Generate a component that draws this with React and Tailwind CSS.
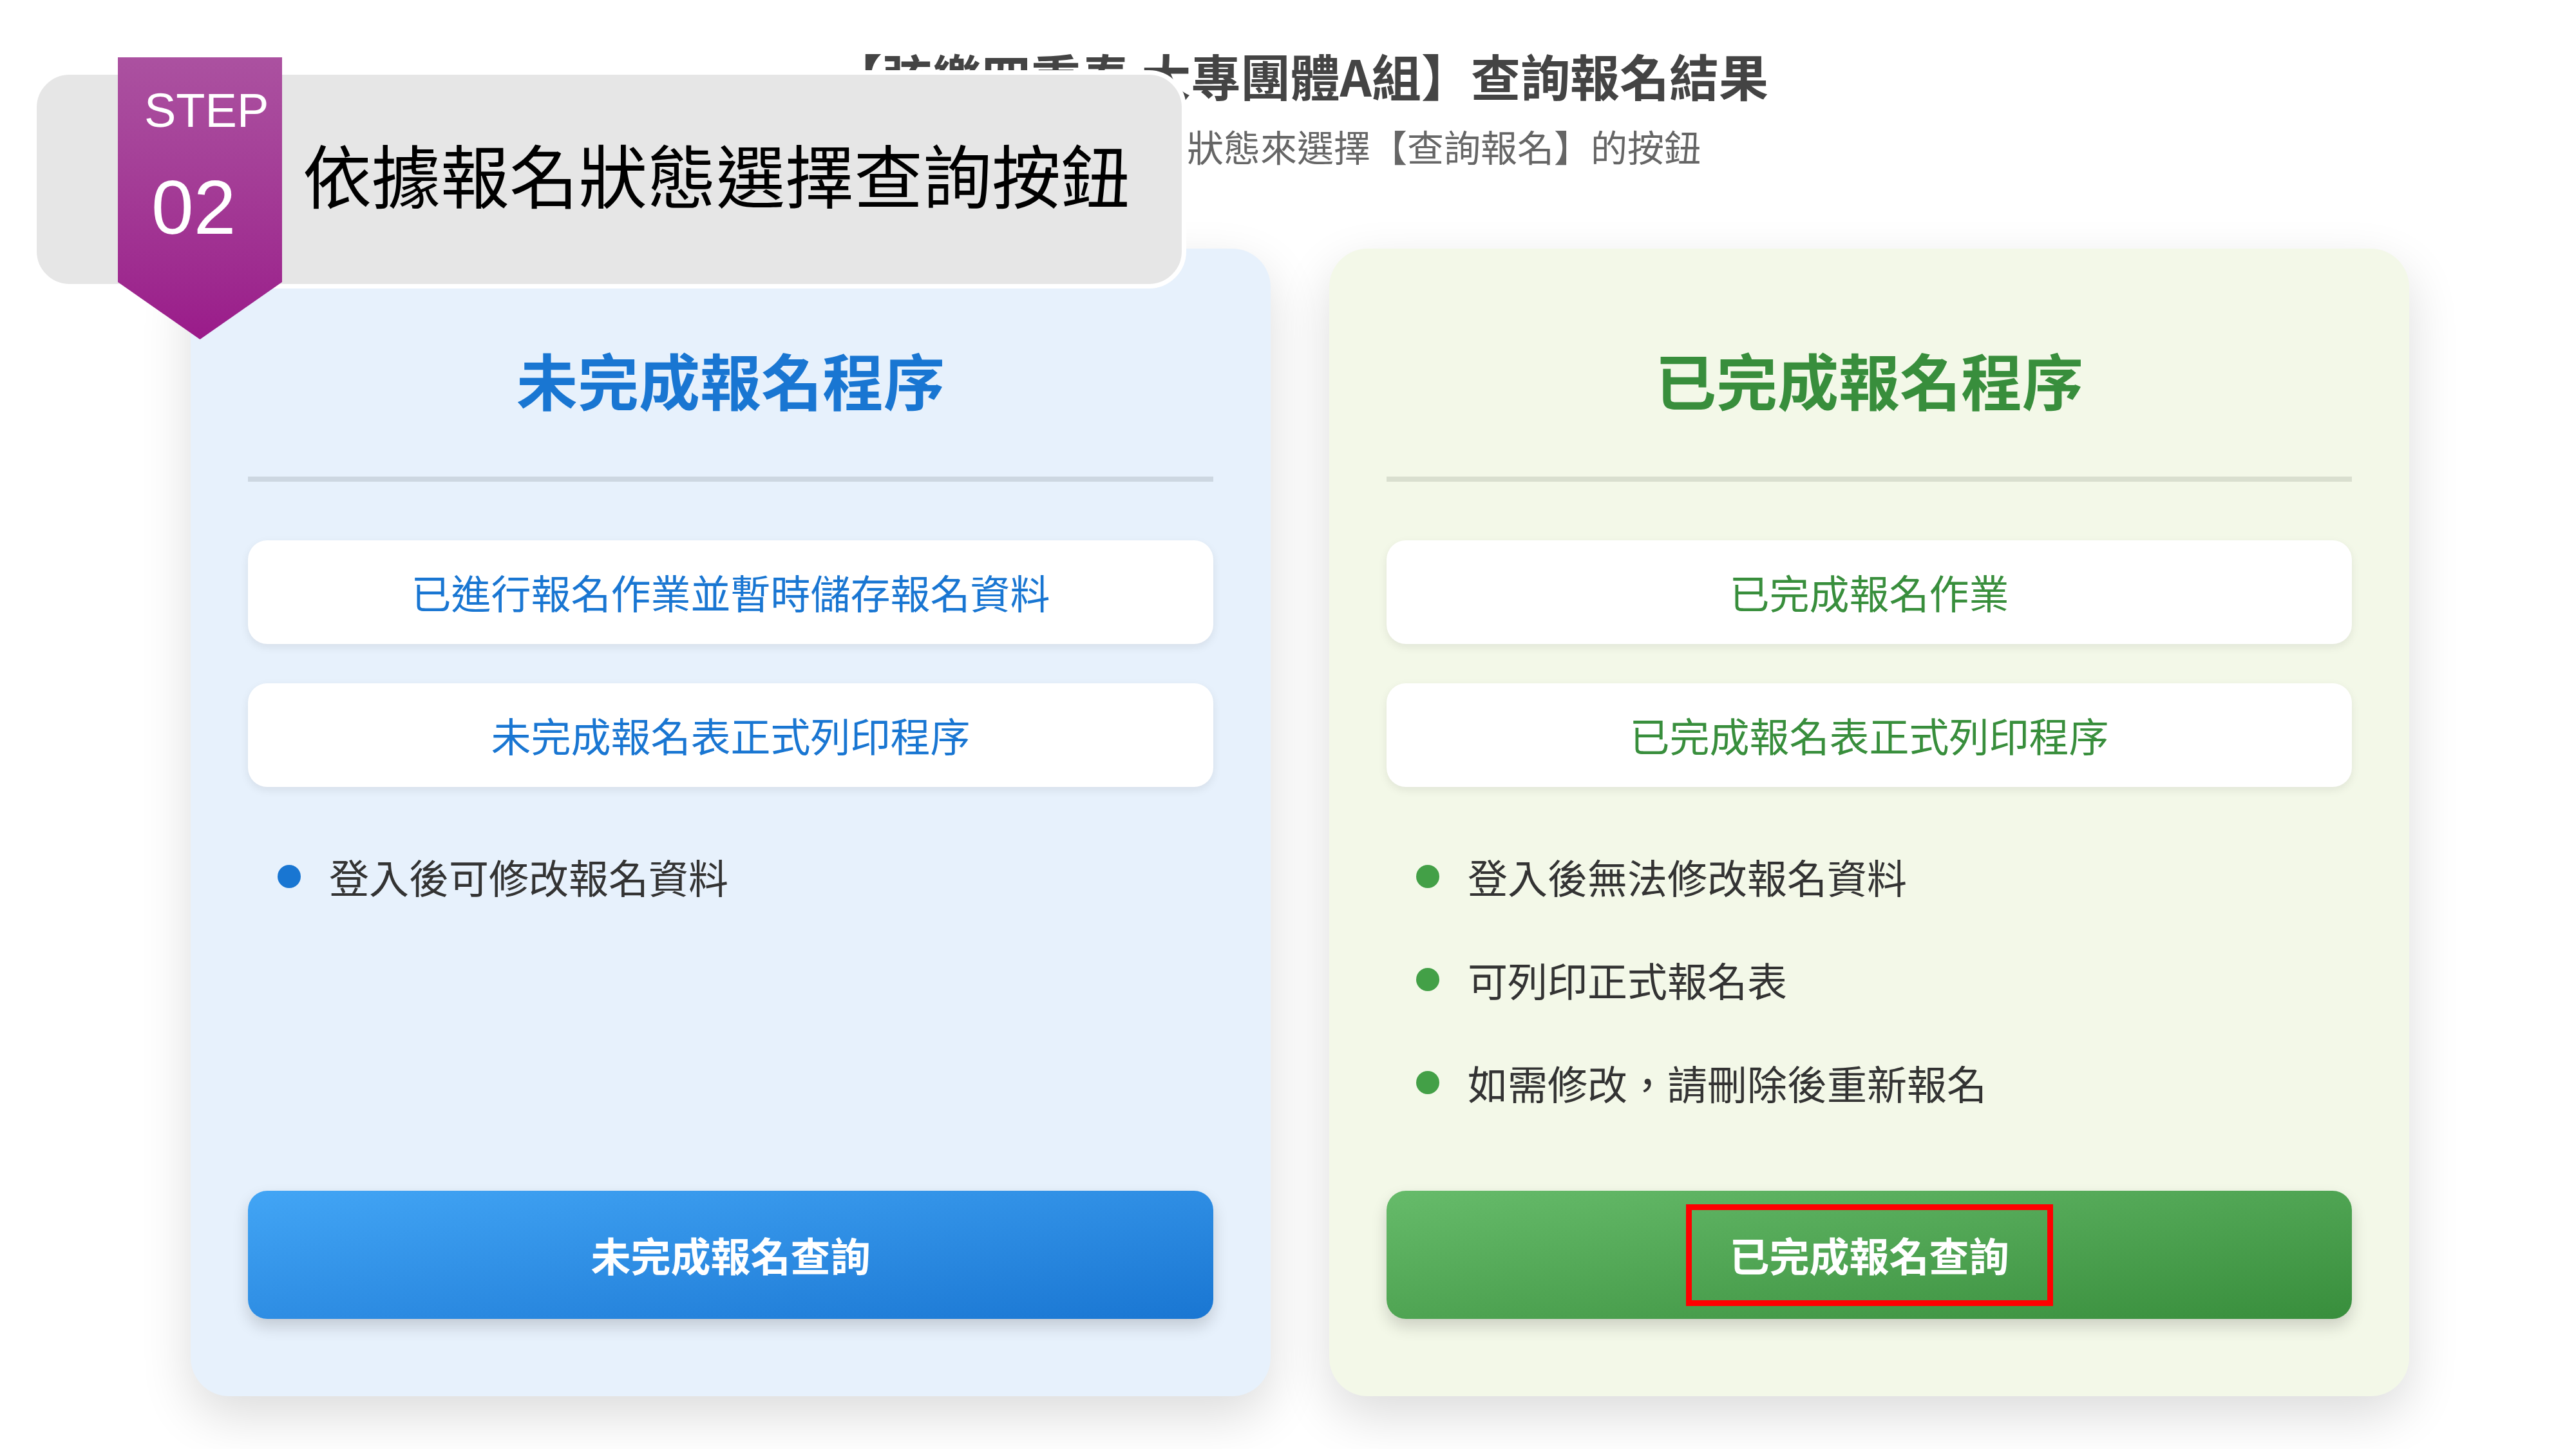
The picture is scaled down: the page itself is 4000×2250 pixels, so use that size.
import React from 'react';

const cards = [
  {
    key: 'pending',
    title: '未完成報名程序',
    boxes: ['已進行報名作業並暫時儲存報名資料', '未完成報名表正式列印程序'],
    notes: ['登入後可修改報名資料'],
    button: '未完成報名查詢',
    bg: 'bg-[#e7f1fc]',
    accent: 'text-[#1976d2]',
    dot: 'bg-[#1976d2]',
    rule: 'bg-[#cdd7e1]',
    btn: 'bg-linear-to-br from-[#42a5f5] to-[#1976d2]',
    marked: false,
  },
  {
    key: 'done',
    title: '已完成報名程序',
    boxes: ['已完成報名作業', '已完成報名表正式列印程序'],
    notes: ['登入後無法修改報名資料', '可列印正式報名表', '如需修改，請刪除後重新報名'],
    button: '已完成報名查詢',
    bg: 'bg-[#f3f8e8]',
    accent: 'text-[#388e3c]',
    dot: 'bg-[#43a047]',
    rule: 'bg-[#d9dfcf]',
    btn: 'bg-linear-to-br from-[#66bb6a] to-[#388e3c]',
    marked: true,
  },
];

const StatusCard = ({ card }) => (
  <div className={`w-[1677px] h-[1782px] rounded-[60px] px-[89px] pt-[155px] pb-[120px] flex flex-col shadow-[0_30px_80px_rgba(0,0,0,0.14)] ${card.bg}`}>
    <h2 className={`text-[95px] leading-none font-bold text-center ${card.accent}`}>{card.title}</h2>
    <div className={`mt-[104px] h-[8px] ${card.rule}`} />

    <div className="mt-[91px] flex flex-col gap-[61px]">
      {card.boxes.map((t) => (
        <div
          key={t}
          className={`h-[161px] rounded-[30px] bg-white flex items-center justify-center text-[62px] shadow-[0_5px_14px_rgba(0,0,0,0.08)] ${card.accent}`}
        >
          {t}
        </div>
      ))}
    </div>

    <ul className="mt-[108px] flex flex-col gap-[98px] pl-[46px]">
      {card.notes.map((n) => (
        <li key={n} className="h-[62px] flex items-center gap-[44px] text-[62px] leading-none text-[#333]">
          <span className={`w-[36px] h-[36px] rounded-full shrink-0 ${card.dot}`} />
          {n}
        </li>
      ))}
    </ul>

    <button
      className={`mt-auto h-[199px] rounded-[30px] flex items-center justify-center text-white text-[62px] font-bold shadow-[0_12px_24px_rgba(0,0,0,0.16)] ${card.btn}`}
    >
      {card.marked ? (
        <span className="w-[570px] h-[158px] border-[9px] border-[#ff0000] flex items-center justify-center">
          {card.button}
        </span>
      ) : (
        card.button
      )}
    </button>
  </div>
);

export default function App() {
  return (
    <div className="relative w-[4000px] h-[2250px] bg-white overflow-hidden font-['Noto_Sans_CJK_TC','Noto_Sans_CJK_JP',sans-serif]">
      {/* Page */}
      <div className="pl-[296px] pt-[78px]">
        <div className="w-[3447px] text-center">
          <h1 className="text-[77px] leading-none font-bold text-[#444]">【弦樂四重奏 大專團體A組】查詢報名結果</h1>
          <p className="mt-[43px] pl-[46px] text-[57px] leading-none text-[#666]">請依據您的報名狀態來選擇【查詢報名】的按鈕</p>
        </div>

        <div className="mt-[131px] flex gap-[91px]">
          {cards.map((c) => (
            <StatusCard key={c.key} card={c} />
          ))}
        </div>
      </div>

      {/* Step banner overlay */}
      <div className="absolute left-[50px] top-[109px] w-[1792px] h-[339px] rounded-[58px] border-[7px] border-white bg-[#e6e6e6] flex items-center pl-[413px] pb-[20px]">
        <span className="text-[107px] leading-none text-black">依據報名狀態選擇查詢按鈕</span>
      </div>

      <div className="absolute left-[183px] top-[89px] w-[255px] h-[438px] bg-linear-to-b from-[#ab51a0] to-[#9a1a8a] [clip-path:polygon(0_0,100%_0,100%_79.7%,50%_100%,0_79.7%)] font-['Liberation_Sans',Arial,sans-serif] text-white">
        <div className="pl-[41px] pt-[46px] text-[74px] leading-none">STEP</div>
        <div className="pl-[52px] mt-[54px] text-[118px] leading-none">02</div>
      </div>
    </div>
  );
}
